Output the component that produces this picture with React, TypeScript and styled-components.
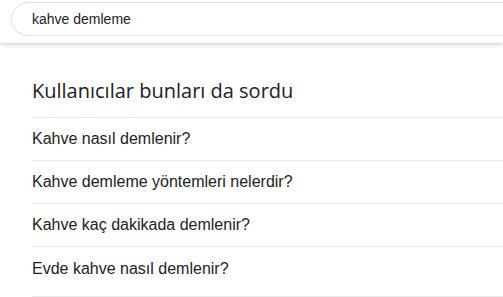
import React from "react";
import styled, { createGlobalStyle } from "styled-components";

const Global = createGlobalStyle`
  html, body { margin: 0; padding: 0; background: #fff; }
  body { font-family: "Liberation Sans", Arial, sans-serif; color: #202124; overflow: hidden; }
`;

const Header = styled.header`
  height: 43px;
  padding: 2px 0 0 11px;
  box-sizing: border-box;
  background: #fff;
  box-shadow: 0 1px 5px rgba(32, 33, 36, 0.24);
  display: flex;
`;

const SearchBox = styled.div`
  flex: 1;
  height: 34px;
  box-sizing: border-box;
  border: 1px solid #dfe1e5;
  border-right: none;
  border-radius: 17px 0 0 17px;
  display: flex;
  align-items: center;
  padding-left: 20px;
  font-size: 14px;
  color: #222;
`;

const Section = styled.section`
  padding: 36px 0 0 32px;
`;

const Title = styled.h2`
  margin: 0;
  padding-bottom: 14px;
  font-family: "Open Sans", sans-serif;
  font-weight: 400;
  font-size: 20px;
  line-height: 24px;
  color: #202124;
  border-bottom: 1px solid #e8eaed;
`;

const List = styled.div`
  border-bottom: 1px solid #e8eaed;
  padding-bottom: 6px;
`;

const Row = styled.div<{ $last?: boolean }>`
  height: 43px;
  box-sizing: border-box;
  display: flex;
  align-items: center;
  font-size: 16px;
  color: #222;
  border-bottom: ${(p) => (p.$last ? "none" : "1px solid #e8eaed")};
`;

const questions = [
  "Kahve nasıl demlenir?",
  "Kahve demleme yöntemleri nelerdir?",
  "Kahve kaç dakikada demlenir?",
  "Evde kahve nasıl demlenir?",
];

export default function App() {
  return (
    <>
      <Global />
      <Header>
        <SearchBox>kahve demleme</SearchBox>
      </Header>
      <Section>
        <Title>Kullanıcılar bunları da sordu</Title>
        <List>
          {questions.map((q, i) => (
            <Row key={q} $last={i === questions.length - 1}>
              {q}
            </Row>
          ))}
        </List>
      </Section>
    </>
  );
}
